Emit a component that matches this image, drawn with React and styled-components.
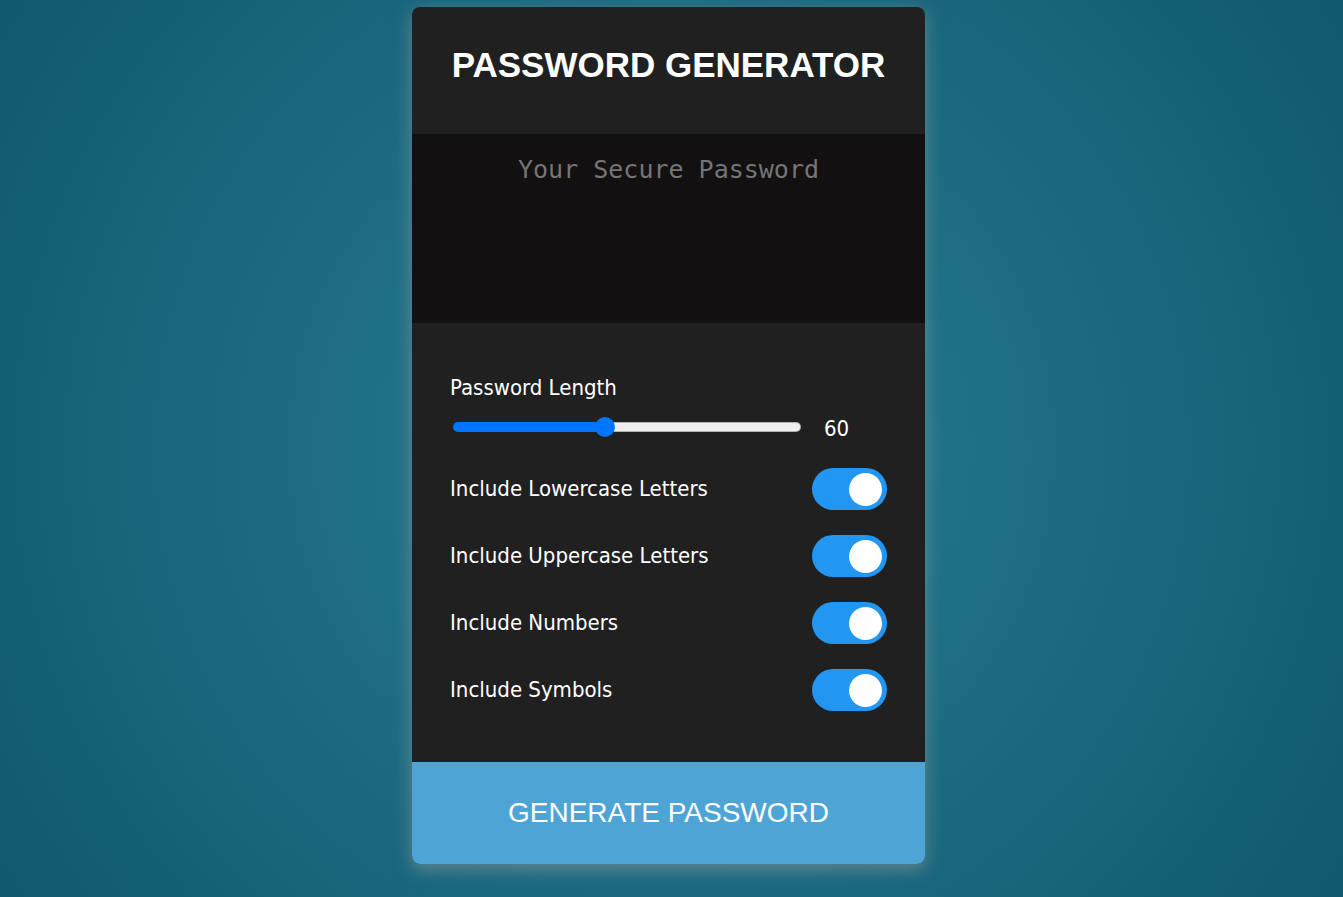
import React, { useState } from "react";
import styled, { createGlobalStyle } from "styled-components";

const GlobalStyle = createGlobalStyle`
  *, *::before, *::after { box-sizing: border-box; }
  html, body, #root { min-height: 100vh; }
  body {
    margin: 0;
    font-family: Tahoma, "DejaVu Sans Condensed", "Noto Sans", sans-serif;
    color: #fff;
  }
`;

const Page = styled.main`
  display: flex;
  justify-content: center;
  align-items: flex-start;
  min-height: 100vh;
  padding: 7px 6px 33px 0;
  background: radial-gradient(circle, #297d94, #0f5970);
`;

const Card = styled.form`
  display: flex;
  flex-direction: column;
  width: 100%;
  max-width: 513px;
  overflow: hidden;
  border-radius: 8px;
  background: #202020;
  box-shadow: 0 5px 18px rgba(150, 155, 155, 0.6);
`;

const Title = styled.h1`
  margin: 0;
  padding: 38px 0 50px;
  font-family: "Liberation Sans", Arial, sans-serif;
  font-size: 35px;
  line-height: 39px;
  font-weight: 700;
  text-align: center;
  text-transform: uppercase;
  white-space: nowrap;
`;

const Output = styled.textarea`
  display: block;
  width: 100%;
  height: 189px;
  padding: 19px 25px;
  border: 0;
  outline: 0;
  resize: none;
  background: #121011;
  color: #fff;
  font-family: Consolas, "DejaVu Sans Mono", monospace;
  font-size: 25px;
  line-height: 34px;
  text-align: center;
  &::placeholder { color: #757575; opacity: 1; }
`;

const Options = styled.div`
  display: flex;
  flex-direction: column;
  gap: 25px;
  padding: 50px 38px 51px;
`;

const LengthField = styled.div`
  display: flex;
  flex-direction: column;
`;

const Label = styled.label`
  font-size: 22px;
  line-height: 30px;
  white-space: nowrap;
`;

const SliderRow = styled.div`
  display: flex;
  align-items: center;
  gap: 23px;
  height: 40px;
  padding: 8px 0 0 3px;
`;

const Slider = styled.input`
  flex: 0 1 348px;
  min-width: 0;
  height: 20px;
  margin: 0;
  appearance: none;
  background: transparent;

  &::-webkit-slider-runnable-track {
    height: 10px;
    border: 1px solid transparent;
    border-radius: 5px;
    background:
      linear-gradient(90deg, #0075ff var(--fill), transparent var(--fill)) border-box,
      linear-gradient(#efefef, #efefef) padding-box,
      linear-gradient(#b2b2b2, #b2b2b2) border-box;
  }
  &::-webkit-slider-thumb {
    appearance: none;
    width: 20px;
    height: 20px;
    margin-top: -6px;
    border: 0;
    border-radius: 50%;
    background: #0075ff;
  }
`;

const Value = styled.output`
  padding-top: 3px;
  font-size: 22px;
  line-height: 30px;
`;

const OptionRow = styled.div`
  display: flex;
  align-items: center;
  justify-content: space-between;
  height: 42px;
`;

const Switch = styled.input.attrs({ type: "checkbox", role: "switch" })`
  display: flex;
  align-items: center;
  flex: none;
  width: 75px;
  height: 42px;
  margin: 0;
  padding: 0 5px;
  appearance: none;
  border-radius: 21px;
  background: #ccc;
  cursor: pointer;

  &::before {
    content: "";
    width: 33px;
    height: 33px;
    border-radius: 50%;
    background: #fff;
  }
  &:checked {
    justify-content: flex-end;
    background: #2196f3;
  }
`;

const GenerateButton = styled.button`
  height: 102px;
  padding: 0;
  border: 0;
  background: #4fa4d6;
  color: #fff;
  font-family: "Liberation Sans", Arial, sans-serif;
  font-size: 28px;
  line-height: 32px;
  text-transform: uppercase;
  cursor: pointer;
`;

const MIN = 8;
const MAX = 128;
const SETS = [
  { id: "lower", label: "Include Lowercase Letters", chars: "abcdefghijklmnopqrstuvwxyz" },
  { id: "upper", label: "Include Uppercase Letters", chars: "ABCDEFGHIJKLMNOPQRSTUVWXYZ" },
  { id: "numbers", label: "Include Numbers", chars: "0123456789" },
  { id: "symbols", label: "Include Symbols", chars: "!@#$%^&*()-_=+[]{}<>?" },
];

export default function App() {
  const [length, setLength] = useState(60);
  const [password, setPassword] = useState("");
  const [enabled, setEnabled] = useState({ lower: true, upper: true, numbers: true, symbols: true });

  const generate = (event) => {
    event.preventDefault();
    const pool = SETS.filter((s) => enabled[s.id]).map((s) => s.chars).join("");
    if (!pool) return;
    setPassword(Array.from({ length }, () => pool[Math.floor(Math.random() * pool.length)]).join(""));
  };

  return (
    <>
      <GlobalStyle />
      <Page>
        <Card onSubmit={generate}>
          <Title>Password Generator</Title>
          <Output readOnly aria-label="Password" placeholder="Your Secure Password" value={password} />
          <Options>
            <LengthField>
              <Label htmlFor="length">Password Length</Label>
              <SliderRow>
                <Slider
                  id="length"
                  type="range"
                  min={MIN}
                  max={MAX}
                  value={length}
                  onChange={(e) => setLength(Number(e.target.value))}
                  style={{ "--fill": `${((length - MIN) / (MAX - MIN)) * 100}%` }}
                />
                <Value htmlFor="length">{length}</Value>
              </SliderRow>
            </LengthField>
            {SETS.map(({ id, label }) => (
              <OptionRow key={id}>
                <Label htmlFor={id}>{label}</Label>
                <Switch
                  id={id}
                  checked={enabled[id]}
                  onChange={() => setEnabled({ ...enabled, [id]: !enabled[id] })}
                />
              </OptionRow>
            ))}
          </Options>
          <GenerateButton type="submit">Generate Password</GenerateButton>
        </Card>
      </Page>
    </>
  );
}
